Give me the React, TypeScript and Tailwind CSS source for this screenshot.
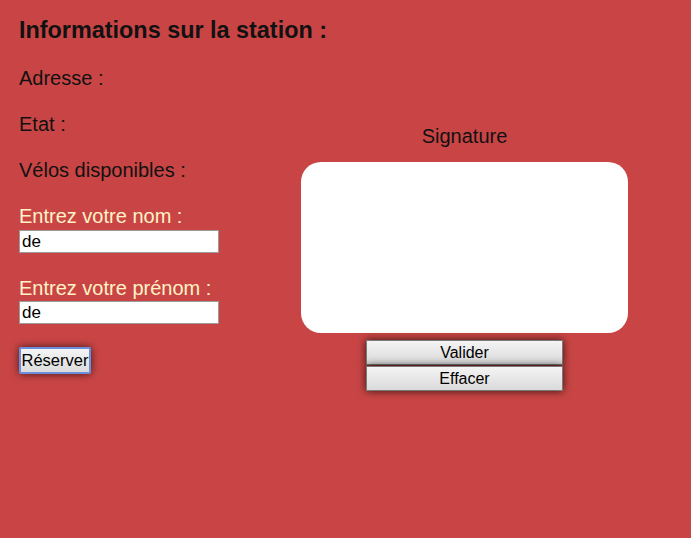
import React from 'react';

const font = "font-['Liberation_Sans',Arial,sans-serif]";

const StationInfo: React.FC = () => {
  return (
    <div className="w-[301px] shrink-0 pl-[19px] pt-[17px]">
      <h3 className="h-[27px] whitespace-nowrap text-[23.4px] font-bold leading-[27px] text-[#111]">Informations sur la station :</h3>
      <p className="mt-[23px] text-[20px] leading-[23px] text-[#111]">Adresse :</p>
      <p className="mt-[23px] text-[20px] leading-[23px] text-[#111]">Etat :</p>
      <p className="mt-[23px] text-[20px] leading-[23px] text-[#111]">Vélos disponibles :</p>

      {/* Formulaire de réservation */}
      <label className="mt-[23px] block text-[20px] leading-[23px] text-[#fff3c6]">Entrez votre nom :</label>
      <input
        defaultValue="de"
        className="mt-[2px] block h-[23px] w-[200px] border border-[#9a9a9a] bg-white px-[2px] text-[17px] leading-[21px] text-black outline-none"
      />
      <label className="mt-[24px] block text-[20px] leading-[23px] text-[#fff3c6]">Entrez votre prénom :</label>
      <input
        defaultValue="de"
        className="mt-[1px] block h-[23px] w-[200px] border border-[#9a9a9a] bg-white px-[2px] text-[17px] leading-[21px] text-black outline-none"
      />
      <button className="mt-[23px] block h-[27px] w-[72px] rounded-[2px] border-2 border-[#6a8fdc] bg-gradient-to-b from-[#f4f4f4] to-[#dcdcdc] p-0 text-[16.5px] leading-[23px] text-black shadow-[0_0_8px_rgba(0,0,0,0.65)]">
        Réserver
      </button>
    </div>
  );
};

const SignaturePad: React.FC = () => {
  return (
    <div className="flex w-[327px] flex-col items-center pt-[125px]">
      <p className="text-[20px] leading-[23px] text-[#111]">Signature</p>
      <div className="mt-[14px] h-[171px] w-[327px] rounded-[20px] bg-white" />
      <div className="mt-[7px] flex flex-col gap-[1px]">
        <button className="h-[25px] w-[197px] border border-[#7a7a7a] bg-gradient-to-b from-[#f4f4f4] to-[#dadada] text-[16px] leading-[22px] text-black shadow-[0_0_9px_rgba(0,0,0,0.75)]">
          Valider
        </button>
        <button className="h-[25px] w-[197px] border border-[#7a7a7a] bg-gradient-to-b from-[#f4f4f4] to-[#dadada] text-[16px] leading-[22px] text-black shadow-[0_0_9px_rgba(0,0,0,0.75)]">
          Effacer
        </button>
      </div>
    </div>
  );
};

export default function App() {
  return (
    <div className={`${font} flex min-h-[538px] w-full bg-[#c94545]`}>
      <StationInfo />
      <SignaturePad />
    </div>
  );
}
